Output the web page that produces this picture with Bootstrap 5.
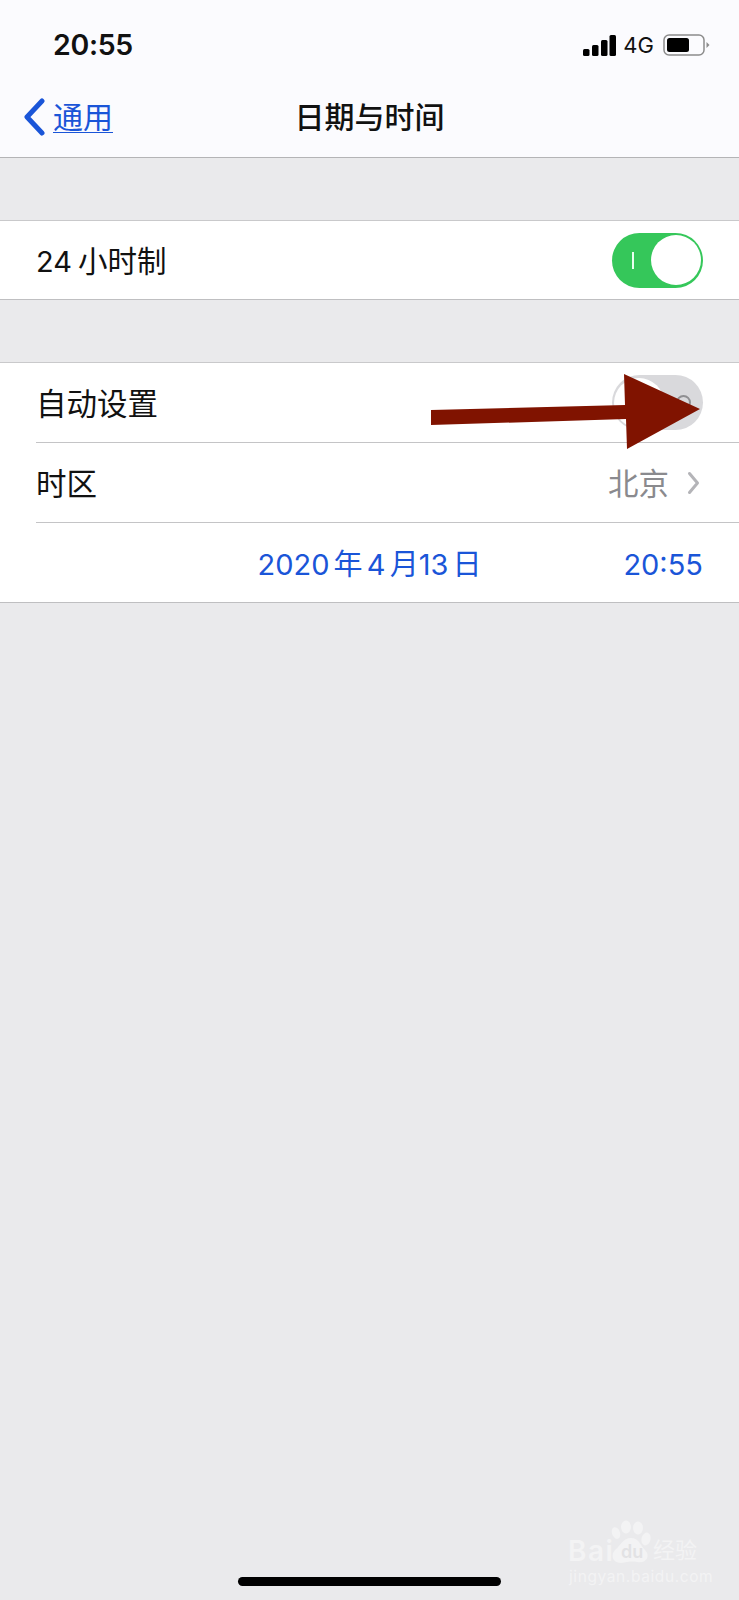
<!DOCTYPE html>
<html lang="zh-CN">
<head>
    <meta charset="UTF-8">
    <meta name="viewport" content="width=device-width, initial-scale=1.0">
    <title>日期与时间</title>
    <link href="https://cdn.jsdelivr.net/npm/bootstrap@5.3.1/dist/css/bootstrap.min.css" rel="stylesheet">
    <style>
        body {
            background-color: #eaeaec;
            font-family: "Inter", "Noto Sans CJK SC", sans-serif;
            color: #111;
            height: 1600px;
            overflow: hidden;
        }
        .phone-page { height: 1600px; }
        .top-head {
            height: 158px;
            background: #fbfbfe;
            border-bottom: 1px solid #b4b4b6;
        }
        .status-line { height: 78px; padding: 12px 29px 0 53px; }
        .status-time { font-size: 28.5px; font-weight: 600; letter-spacing: -0.3px; }
        .status-net { font-size: 22px; line-height: 1; margin: 0 9px 0 7px; }
        .nav-line { height: 79px; }
        .nav-title { font-size: 30px; font-weight: 500; line-height: 1; margin-top: -1px; }
        .back-link {
            left: 23px;
            top: 20px;
            color: #1a55d8;
            font-size: 30px;
            line-height: 1;
            text-underline-offset: 4px;
            text-decoration-thickness: 1px;
        }
        .set-group { margin-top: 62px; background: #fff; border-top: 1px solid #c9c9cb; border-bottom: 1px solid #bfbfc1; }
        .set-item { padding: 0 36px 0 0; margin-left: 36px; height: 80px; font-size: 30.5px; font-weight: 400; border-bottom: 1px solid #c4c4c6; }
        .set-item:last-child { border-bottom: 0; height: 79px; }
        .first-group .set-item { height: 78px; }
        .second-group { margin-top: 62px; }
        .row-text { padding-top: 3px; }
        .hour-digits { margin-right: 6px; font-size: 29px; }
        .hour-label { font-size: 29.5px; }
        .grey-value { color: #8a8a8e; margin-right: 2px; }
        .date-item { display: grid; grid-template-columns: 1fr auto 1fr; align-items: center; color: #1a55d8; font-size: 29px; word-spacing: -4px; }
        .date-item .row-text { padding-top: 5px; }
        .date-item span:last-child { justify-self: end; }
        .switch-track { width: 91px; height: 55px; border-radius: 28px; }
        .switch-on { background: #35c75a; }
        .switch-off { background: #d9d9dc; }
        .switch-knob { width: 50px; height: 50px; border-radius: 50%; background: #fff; top: 2.5px; }
        .switch-on .switch-knob { right: 2px; }
        .switch-off .switch-knob { left: 2px; }
        .on-mark { left: 20px; top: 19px; width: 2px; height: 17px; background: #e9fff0; }
        .off-mark { right: 12px; top: 20px; width: 15px; height: 15px; border: 2px solid #8f8f92; border-radius: 50%; }
        .chevron-gap { margin-right: 3px; }
        .red-arrow { left: 425px; top: 370px; }
        .home-bar { left: 238px; top: 1577px; width: 263px; height: 9px; background: #000; border-radius: 5px; }
        .mark-wm { left: 566px; top: 1518px; width: 135px; height: 70px; color: #f3f3f4; }
        .wm-bai { left: 2px; top: 19px; font-size: 28px; font-weight: 600; line-height: 1; letter-spacing: 1.5px; }
        .wm-du { left: 55px; top: 25px; font-size: 18px; font-weight: 600; line-height: 1; color: #e2e2e4; }
        .wm-jy { left: 87px; top: 21px; font-size: 22px; font-weight: 400; line-height: 1; }
        .wm-url { left: 3px; top: 51px; font-size: 15.5px; line-height: 1; letter-spacing: 0.6px; }
    </style>
</head>
<body>
    <div class="phone-page position-relative">

        <!-- Header -->
        <div class="top-head">
            <div class="status-line d-flex justify-content-between align-items-center">
                <span class="status-time">20:55</span>
                <div class="d-flex align-items-center">
                    <svg width="33" height="21" viewBox="0 0 33 21">
                        <rect x="0" y="14" width="6.5" height="7" rx="1.5" fill="#000"/>
                        <rect x="9" y="10" width="6.5" height="11" rx="1.5" fill="#000"/>
                        <rect x="18" y="5" width="6.5" height="16" rx="1.5" fill="#000"/>
                        <rect x="26.5" y="0" width="6.5" height="21" rx="1.5" fill="#000"/>
                    </svg>
                    <span class="status-net">4G</span>
                    <svg width="47" height="22" viewBox="0 0 47 22">
                        <rect x="1" y="1" width="40" height="20" rx="5" fill="none" stroke="#8c8c8c" stroke-width="1.5"/>
                        <rect x="4" y="4" width="22" height="14" rx="2.5" fill="#000"/>
                        <path d="M43.5 8 L46.5 11 L43.5 14 Z" fill="#8c8c8c"/>
                    </svg>
                </div>
            </div>
            <div class="nav-line position-relative d-flex justify-content-center align-items-center">
                <a class="back-link position-absolute d-flex align-items-start" href="#">
                    <svg width="22" height="38" viewBox="0 0 22 38" class="me-2">
                        <path d="M19 3 L4 19 L19 35" fill="none" stroke="#1a55d8" stroke-width="5" stroke-linecap="round" stroke-linejoin="round"/>
                    </svg>
                    <span class="mt-1">通用</span>
                </a>
                <span class="nav-title">日期与时间</span>
            </div>
        </div>

        <!-- 24 hour -->
        <div class="set-group first-group">
            <div class="set-item d-flex justify-content-between align-items-center">
                <span class="row-text hour-label"><span class="hour-digits">24</span>小时制</span>
                <div class="switch-track switch-on position-relative">
                    <div class="on-mark position-absolute"></div>
                    <div class="switch-knob position-absolute"></div>
                </div>
            </div>
        </div>

        <!-- Auto / zone / date -->
        <div class="set-group second-group">
            <div class="set-item d-flex justify-content-between align-items-center">
                <span class="row-text">自动设置</span>
                <div class="switch-track switch-off position-relative">
                    <div class="off-mark position-absolute"></div>
                    <div class="switch-knob position-absolute"></div>
                </div>
            </div>
            <div class="set-item d-flex justify-content-between align-items-center">
                <span class="row-text">时区</span>
                <div class="d-flex align-items-center gap-3 chevron-gap">
                    <span class="grey-value row-text">北京</span>
                    <svg width="13" height="24" viewBox="0 0 13 24">
                        <path d="M2.5 2.5 L10.5 12 L2.5 21.5" fill="none" stroke="#b4b4b8" stroke-width="3" stroke-linecap="round" stroke-linejoin="round"/>
                    </svg>
                </div>
            </div>
            <div class="set-item date-item">
                <span></span>
                <span class="row-text">2020 年 4 月13 日</span>
                <span class="row-text">20:55</span>
            </div>
        </div>

        <!-- Annotation drawn over the screenshot -->
        <svg class="red-arrow position-absolute" width="285" height="85" viewBox="0 0 285 85">
            <path d="M6 40 L200 35 L199 4 L275 39 L202 79 L201 49 L6 55 Z" fill="#801300"/>
        </svg>

        <!-- Watermark -->
        <div class="mark-wm position-absolute">
            <svg class="position-absolute top-0 start-0" width="135" height="50" viewBox="0 0 135 50">
                <ellipse cx="50" cy="15" rx="4" ry="6" fill="currentColor" transform="rotate(-20 50 15)"/>
                <ellipse cx="60" cy="9" rx="5" ry="6.5" fill="currentColor"/>
                <ellipse cx="72" cy="10" rx="5" ry="6.5" fill="currentColor"/>
                <ellipse cx="80" cy="21" rx="4.5" ry="6.5" fill="currentColor" transform="rotate(15 80 21)"/>
                <path d="M55 45 C46 45 44 36 50 31 C55 27 57 20 65 20 C73 20 74 27 79 32 C85 38 80 46 71 44 C66 43 61 44 55 45 Z" fill="currentColor"/>
            </svg>
            <span class="wm-bai position-absolute">Bai</span>
            <span class="wm-du position-absolute">du</span>
            <span class="wm-jy position-absolute">经验</span>
            <span class="wm-url position-absolute">jingyan.baidu.com</span>
        </div>

        <div class="home-bar position-absolute"></div>
    </div>

    <script src="https://cdn.jsdelivr.net/npm/bootstrap@5.3.1/dist/js/bootstrap.bundle.min.js"></script>
</body>
</html>
